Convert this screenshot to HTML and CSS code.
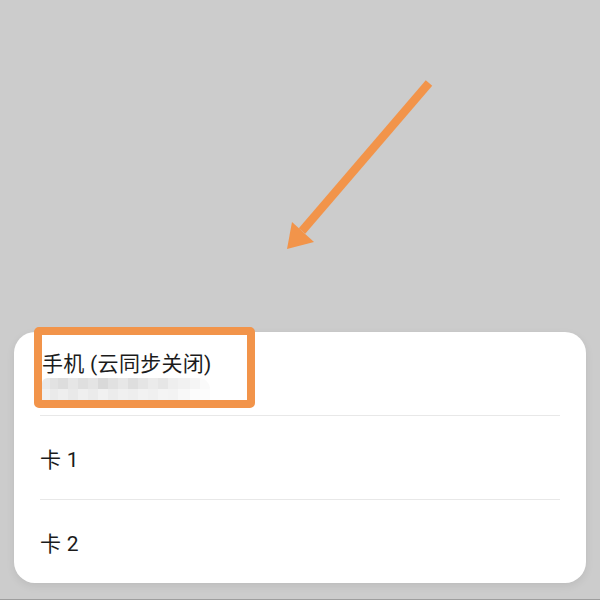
FILE: index.html
```html
<!DOCTYPE html>
<html lang="zh-CN">
<head>
<meta charset="utf-8">
<link rel="stylesheet" href="styles.css">
</head>
<body>
<div class="screen">
  <svg class="arrow" width="600" height="300" viewBox="0 0 600 300">
    <line x1="429" y1="83" x2="302" y2="231" stroke="#f2944a" stroke-width="8.5"/>
    <polygon points="287,249 292,222 314,242" fill="#f2944a"/>
  </svg>
  <div class="sheet">
    <div class="row first">
      <div class="title">手机 (云同步关闭)</div>
      <div class="mosaic">
        <div class="mrow top"></div>
        <div class="mrow bottom"></div>
      </div>
      <div class="highlight"></div>
    </div>
    <div class="divider"></div>
    <div class="row">卡 1</div>
    <div class="divider"></div>
    <div class="row">卡 2</div>
  </div>
  <div class="bottom-line"></div>
</div>
</body>
</html>
```
FILE: styles.css
```css
html, body {
  margin: 0;
  padding: 0;
}
body {
  background: #cccccc;
  font-family: Roboto, "Noto Sans CJK SC", sans-serif;
  color: #1b1b1b;
}
.screen {
  position: relative;
  width: 600px;
  height: 600px;
  display: flex;
  flex-direction: column;
  overflow: hidden;
}
.arrow {
  position: absolute;
  left: 0;
  top: 0;
}
.sheet {
  position: relative;
  margin: 332px 14px 0 14px;
  height: 251px;
  background: #ffffff;
  border-radius: 21px;
  box-shadow: 0 3px 8px rgba(0, 0, 0, 0.08);
  display: flex;
  flex-direction: column;
}
.row {
  height: 83px;
  padding: 0 26px;
  display: flex;
  align-items: center;
  font-size: 21px;
  letter-spacing: 0.3px;
}
.row.first {
  position: relative;
  flex-direction: column;
  align-items: flex-start;
  padding-top: 19px;
  box-sizing: border-box;
}
.title {
  line-height: 26px;
  padding-left: 2px;
}
.mosaic {
  margin-top: 1px;
  margin-left: 2px;
  width: 168px;
}
.mrow {
  height: 11px;
}
.mrow.top {
  background: linear-gradient(to right,
    #e9e9e9 0 8px, #e2e2e2 8px 16px, #dddddd 16px 26px, #e6e6e6 26px 36px,
    #dfdfdf 36px 46px, #e4e4e4 46px 56px, #d9d9d9 56px 66px, #e1e1e1 66px 76px,
    #e7e7e7 76px 86px, #dedede 86px 96px, #e5e5e5 96px 106px, #ebebeb 106px 116px,
    #e6e6e6 116px 126px, #eeeeee 126px 136px, #f1f1f1 136px 148px, #f5f5f5 148px 158px,
    #fafafa 158px 168px);
  border-radius: 6px 12px 0 0;
}
.mrow.bottom {
  background: linear-gradient(to right,
    #f0f0f0 0 8px, #eaeaea 8px 16px, #eeeeee 16px 26px, #e9e9e9 26px 36px,
    #efefef 36px 46px, #ebebeb 46px 56px, #f1f1f1 56px 66px, #ececec 66px 76px,
    #f0f0f0 76px 86px, #eeeeee 86px 96px, #f2f2f2 96px 106px, #f0f0f0 106px 116px,
    #f4f4f4 116px 126px, #f3f3f3 126px 136px, #f8f8f8 136px 148px, #fcfcfc 148px 168px);
}
.highlight {
  position: absolute;
  left: 20px;
  top: -5px;
  width: 221px;
  height: 81px;
  box-sizing: border-box;
  border: 8px solid #f2944a;
  border-radius: 5px;
}
.divider {
  height: 1px;
  margin: 0 26px;
  background: #e8e8e8;
}
.bottom-line {
  margin-top: auto;
  height: 1px;
  background: #9e9e9e;
}
```
